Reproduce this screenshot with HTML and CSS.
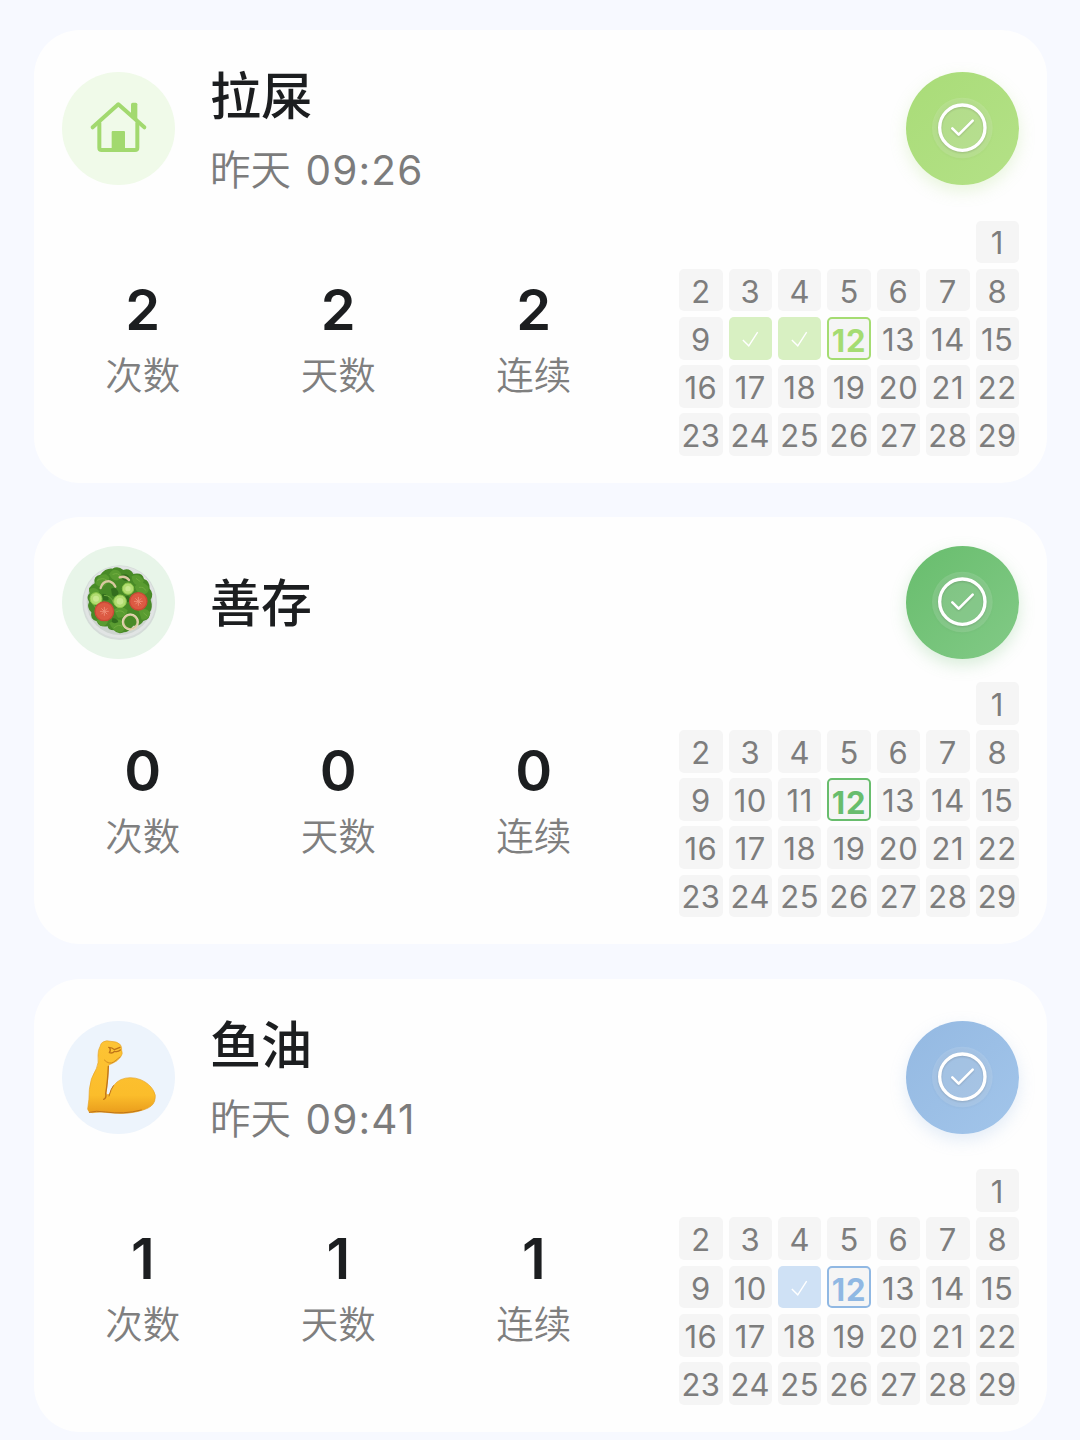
FILE: index.html
```html
<!DOCTYPE html>
<html lang="zh-CN">
<head>
  <meta charset="UTF-8" />
  <meta name="viewport" content="width=device-width, initial-scale=1" />
  <title>打卡</title>
  <link rel="stylesheet" href="styles.css">
</head>
<body>

  <!-- Shared check icon -->
  <svg class="defs" width="0" height="0">
    <symbol id="check" viewBox="48 49 339 339">
      <circle cx="217" cy="217" r="91" fill="#fff" fill-opacity="0.13" />
      <g fill="none" stroke="#fff" stroke-linecap="round" stroke-linejoin="round">
        <circle cx="217" cy="216" r="68" stroke-width="10" />
        <path d="M187 218L206 237L248 195" stroke-width="8" />
      </g>
    </symbol>
  </svg>

  <main class="list">

    <section class="card lime">
      <div class="card-head">
        <div class="avatar">
          <svg viewBox="37 36 339 339">
            <g fill="none" stroke="#a2d96f" stroke-width="12" stroke-linecap="round" stroke-linejoin="round">
              <path d="M129 202L206 133L284 202" />
              <path d="M149 189V263Q149 270 156 270H256Q263 270 263 263V189" />
            </g>
            <path d="M244 133Q244 128 249 128H258Q263 128 263 133V184L244 167Z" fill="#a2d96f" />
            <rect x="186" y="213" width="40" height="58" rx="3" fill="#a2d96f" />
          </svg>
        </div>
        <div class="info">
          <h2>拉屎</h2>
          <p>昨天 <span class="time">09:26</span></p>
        </div>
        <button class="check-btn" aria-label="打卡"><svg><use href="#check" /></svg></button>
      </div>
      <div class="card-body">
        <div class="stats">
          <div class="stat"><strong>2</strong><span>次数</span></div>
          <div class="stat"><strong>2</strong><span>天数</span></div>
          <div class="stat"><strong>2</strong><span>连续</span></div>
        </div>
        <div class="calendar" data-done="10,11"></div>
      </div>
    </section>

    <section class="card green">
      <div class="card-head short">
        <div class="avatar">
          <svg viewBox="36 33 339 339">
            <circle cx="209" cy="203" r="112" fill="#d5dcd9" />
            <circle cx="209" cy="201" r="108" fill="#e1e4e4" />
            <circle cx="209" cy="201" r="99" fill="#cdd4cf" />
            <path d="M134 145Q129 122 151 119Q166 99 187 101Q204 91 220 105Q240 98 250 117Q277 111 282 132Q300 138 299 161Q313 176 302 194Q310 218 299 232Q303 252 280 258Q271 275 250 272Q235 292 222 292Q203 300 192 286Q174 286 173 274Q147 278 140 259Q119 253 124 232Q109 218 117 201Q107 184 120 174Q109 158 134 145Z" fill="#488a27" />
            <g fill="#5a9c31">
              <path d="M136 145Q143 117 168 118Q188 131 166 151Q151 164 136 145Z" />
              <path d="M178 118Q187 97 207 108Q224 123 204 136Q185 139 178 118Z" />
              <path d="M245 124Q267 112 281 136Q282 151 261 151Q246 145 245 124Z" />
              <path d="M117 163Q137 152 148 170Q141 184 120 182Z" />
              <path d="M254 155Q272 130 294 154Q302 171 283 178Q260 177 254 155Z" />
              <path d="M191 224Q215 209 233 226Q230 250 204 248Z" />
              <path d="M178 265Q201 245 222 260Q233 277 215 292Q193 296 178 265Z" />
              <path d="M265 224Q293 216 301 235Q295 257 275 254Z" />
              <path d="M139 256Q155 246 174 259Q169 277 151 272Z" />
            </g>
            <g fill="#326d1d">
              <path d="M183 161Q199 154 206 174Q199 191 186 181Z" />
              <path d="M215 119Q235 113 242 133Q231 143 218 134Z" />
              <path d="M158 176Q176 177 176 194Q164 201 152 189Z" />
              <path d="M224 185Q242 178 240 197Q231 206 225 199Z" />
              <path d="M187 250Q200 248 205 261Q194 268 185 261Z" />
            </g>
            <g fill="none" stroke="#72ad40" stroke-width="3" stroke-linecap="round">
              <path d="M142 136Q157 126 170 135M189 118Q205 111 211 124M259 131L270 139M268 157Q281 154 287 166M199 230Q215 223 223 234M192 279Q206 265 216 274M281 234L291 243M126 205Q137 211 139 225M163 181Q184 181 190 203" />
            </g>
            <g fill="none" stroke="#d9c8a0" stroke-width="7" stroke-linecap="round">
              <path d="M152 159Q158 137 179 139Q191 143 196 155" />
              <path d="M209 127Q226 121 237 135" />
              <circle cx="241" cy="261" r="22" />
            </g>
            <circle cx="241" cy="261" r="24" fill="none" stroke="#efe1c4" stroke-width="2" />
            <g fill="#b1dc71" stroke="#8fc84b" stroke-width="3">
              <circle cx="138" cy="191" r="18" />
              <circle cx="234" cy="161" r="17" />
              <circle cx="210" cy="199" r="19" />
            </g>
            <g fill="#c9e88f">
              <circle cx="138" cy="191" r="9" />
              <circle cx="234" cy="161" r="8" />
              <circle cx="210" cy="199" r="10" />
            </g>
            <g fill="#dc5a43" stroke="#cb4937" stroke-width="4">
              <circle cx="163" cy="229" r="28" />
              <circle cx="265" cy="199" r="26" />
            </g>
            <g fill="none" stroke="#ee8b74" stroke-width="3" stroke-linecap="round">
              <path d="M163 217V241M151 229H175M155 221L171 237M171 221L155 237" />
              <path d="M265 187V211M253 199H277M257 191L273 207M273 191L257 207" />
            </g>
          </svg>
        </div>
        <div class="info">
          <h2>善存</h2>
        </div>
        <button class="check-btn" aria-label="打卡"><svg><use href="#check" /></svg></button>
      </div>
      <div class="card-body">
        <div class="stats">
          <div class="stat"><strong>0</strong><span>次数</span></div>
          <div class="stat"><strong>0</strong><span>天数</span></div>
          <div class="stat"><strong>0</strong><span>连续</span></div>
        </div>
        <div class="calendar" data-done=""></div>
      </div>
    </section>

    <section class="card blue">
      <div class="card-head">
        <div class="avatar">
          <svg viewBox="37 45 339 339">
            <defs>
              <linearGradient id="skin" x1="0" y1="0" x2="0" y2="1">
                <stop offset="0" stop-color="#fdc435" />
                <stop offset="0.75" stop-color="#fbbd2b" />
                <stop offset="1" stop-color="#e99c1c" />
              </linearGradient>
            </defs>
            <path d="M160 108Q170 102 183 106Q202 106 212 116Q217 123 216 133Q221 144 212 154Q203 166 190 171L177 177Q175 222 169 261Q173 272 182 261Q190 232 213 221Q241 209 273 221Q300 233 311 253Q321 268 315 285Q309 303 283 311Q239 326 190 321Q155 316 127 320Q115 319 114 309Q119 280 119 251Q121 218 140 188Q148 171 145 148Q145 131 151 122Q153 111 160 108Z" fill="url(#skin)" stroke="#e6a329" stroke-width="2" />
            <g fill="none" stroke="#bf7418" stroke-width="4" stroke-linecap="round" stroke-linejoin="round">
              <path d="M176 181Q174 229 168 263Q171 277 162 280" />
              <path d="M178 270Q183 249 191 239" stroke-width="3" />
              <path d="M177 124Q188 124 194 131L211 124M179 125Q185 132 179 140Q189 143 194 136Q205 139 212 132" />
              <path d="M164 162Q178 177 192 168L211 153" stroke-width="2" />
              <path d="M119 319Q138 313 168 318Q221 326 275 312" stroke-width="3" />
            </g>
          </svg>
        </div>
        <div class="info">
          <h2>鱼油</h2>
          <p>昨天 <span class="time">09:41</span></p>
        </div>
        <button class="check-btn" aria-label="打卡"><svg><use href="#check" /></svg></button>
      </div>
      <div class="card-body">
        <div class="stats">
          <div class="stat"><strong>1</strong><span>次数</span></div>
          <div class="stat"><strong>1</strong><span>天数</span></div>
          <div class="stat"><strong>1</strong><span>连续</span></div>
        </div>
        <div class="calendar" data-done="11"></div>
      </div>
    </section>

  </main>

  <script>
    const today = 12;
    const tick = '<svg viewBox="0 0 44 43"><path d="M14 23L20 29L29 15" /></svg>';

    document.querySelectorAll('.calendar').forEach(calendar => {
      const done = calendar.dataset.done.split(',').map(Number);

      for (let day = 1; day <= 29; day++) {
        const cell = document.createElement('span');
        cell.className = 'day';
        if (done.includes(day)) {
          cell.classList.add('done');
          cell.innerHTML = tick;
        } else {
          cell.textContent = day;
        }
        if (day === today) cell.classList.add('today');
        calendar.appendChild(cell);
      }
    });
  </script>
</body>
</html>
```

FILE: styles.css
```css
body {
  margin: 0;
  background-color: #f7f9ff;
  color: #1c1e20;
  font-family: Inter, "Noto Sans CJK SC", sans-serif;
}

.defs {
  position: absolute;
}

.list {
  display: flex;
  flex-direction: column;
  gap: 34.5px;
  padding: 30px 33px 8px 34px;
}

.card {
  background-color: #fefefe;
  border-radius: 46px;
  padding: 29px 28px 27px;
}

.lime {
  --main: #a5dc72;
  --from: #a9dc78;
  --to: #b4e187;
  --soft: #f0fae9;
  --done: #d8f0c2;
  --shadow: rgba(169, 220, 120, 0.25);
}

.green {
  --main: #68bd6d;
  --from: #68bd6d;
  --to: #82ca86;
  --soft: #e8f5e9;
  --done: #c3e5c5;
  --shadow: rgba(104, 189, 109, 0.25);
}

.blue {
  --main: #90b8e3;
  --from: #94b9e2;
  --to: #a2c5ea;
  --soft: #edf4fc;
  --done: #cfe1f5;
  --shadow: rgba(148, 185, 226, 0.25);
}

.card-head {
  display: flex;
  align-items: center;
  height: 138.5px;
}

.card-head.short {
  height: 113px;
}

.avatar {
  width: 113px;
  height: 113px;
  border-radius: 50%;
  background-color: var(--soft);
}

.avatar svg,
.check-btn svg {
  display: block;
  width: 100%;
  height: 100%;
}

.info {
  flex: 1;
  padding: 10px 0 0 35px;
}

.short .info {
  padding-top: 2px;
}

.info h2 {
  margin: 0;
  font-size: 51px;
  font-weight: 500;
  line-height: 74px;
}

.info p {
  margin: 0;
  color: #7c7c7c;
  font-size: 40.5px;
  font-weight: 350;
  line-height: 73px;
  word-spacing: 3px;
}

.time {
  font-weight: 400;
  letter-spacing: 1.2px;
}

.check-btn {
  width: 113px;
  height: 113px;
  padding: 0;
  border: none;
  border-radius: 50%;
  background: linear-gradient(135deg, var(--from), var(--to));
  box-shadow: 0 6px 16px var(--shadow);
  cursor: pointer;
}

.check-btn svg {
  filter: drop-shadow(0 1px 1px rgba(0, 0, 0, 0.2));
}

.card-body {
  display: flex;
  justify-content: space-between;
  align-items: center;
  margin-top: 23px;
}

.stats {
  display: grid;
  grid-template-columns: repeat(3, 195.5px);
  margin-left: -17px;
  padding-top: 7px;
}

.stat {
  display: flex;
  flex-direction: column;
  align-items: center;
}

.stat strong {
  font-size: 56px;
  font-weight: 600;
  line-height: 68px;
}

.stat span {
  color: #7f7f7f;
  font-size: 37.5px;
  font-weight: 350;
  line-height: 64px;
}

.calendar {
  display: grid;
  grid-template-columns: repeat(7, 43.5px);
  grid-auto-rows: 42.9px;
  gap: 5.2px 5.9px;
}

.day {
  display: flex;
  align-items: center;
  justify-content: center;
  box-sizing: border-box;
  padding-top: 2px;
  border-radius: 5px;
  background-color: #f5f5f5;
  color: #7d7d7d;
  font-size: 31px;
  letter-spacing: 0.5px;
}

.day:first-child {
  grid-column: 7;
}

.day.done {
  padding: 0;
  background-color: var(--done);
}

.day.done svg {
  width: 100%;
  height: 100%;
  fill: none;
  stroke: #fff;
  stroke-width: 1.4;
}

.day.today {
  border: 2px solid var(--main);
  color: var(--main);
  font-weight: 700;
  letter-spacing: 1px;
  padding-top: 5px;
}
```
